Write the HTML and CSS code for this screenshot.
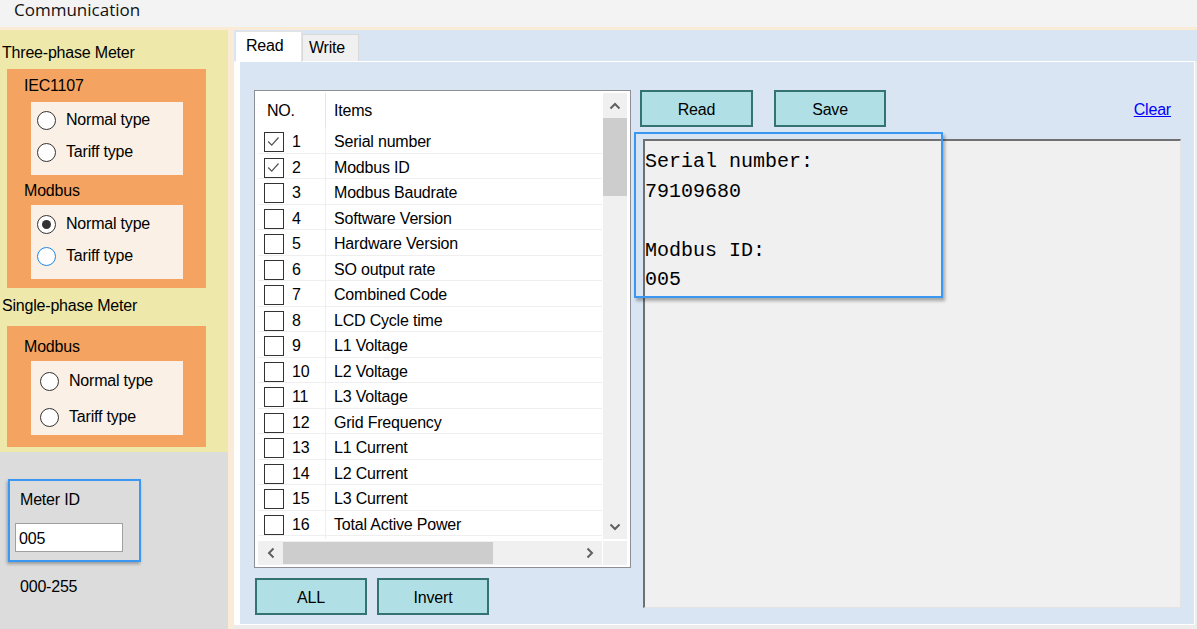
FILE: index.html
```html
<!DOCTYPE html>
<html lang="en">
<head>
<meta charset="utf-8">
<title>Communication</title>
<link rel="stylesheet" href="styles.css">
</head>
<body>
<div class="titlebar">Communication</div>
<div class="main">
  <aside class="side">
    <div class="meters">
      <div class="sect-title first">Three-phase Meter</div>
      <div class="group three">
        <div class="glabel">IEC1107</div>
        <div class="opts a">
          <div class="radio"><span class="circle"></span>Normal type</div>
          <div class="radio"><span class="circle"></span>Tariff type</div>
        </div>
        <div class="glabel b">Modbus</div>
        <div class="opts b">
          <div class="radio"><span class="circle on"></span>Normal type</div>
          <div class="radio"><span class="circle focus"></span>Tariff type</div>
        </div>
      </div>
      <div class="sect-title second">Single-phase Meter</div>
      <div class="group single">
        <div class="glabel">Modbus</div>
        <div class="opts c">
          <div class="radio"><span class="circle"></span>Normal type</div>
          <div class="radio"><span class="circle"></span>Tariff type</div>
        </div>
      </div>
    </div>
    <div class="idarea">
      <div class="idbox">
        <div class="idlabel">Meter ID</div>
        <div class="idinput">005</div>
      </div>
      <div class="range">000-255</div>
    </div>
  </aside>

  <section class="tabs">
    <div class="tabstrip">
      <div class="tab active">Read</div>
      <div class="tab">Write</div>
    </div>
    <div class="page">
      <div class="col-left">
        <div class="listview">
          <div class="rows">
            <div class="lhead"><div class="c1">NO.</div><div class="c2">Items</div></div>
            <div class="row"><div class="c1"><span class="cb"><svg viewBox="0 0 20 20" width="18" height="18"><polyline points="3.5,9.5 7.5,13.5 15,5" fill="none" stroke="#555" stroke-width="1.4"/></svg></span>1</div><div class="c2">Serial number</div></div>
            <div class="row"><div class="c1"><span class="cb"><svg viewBox="0 0 20 20" width="18" height="18"><polyline points="3.5,9.5 7.5,13.5 15,5" fill="none" stroke="#555" stroke-width="1.4"/></svg></span>2</div><div class="c2">Modbus ID</div></div>
            <div class="row"><div class="c1"><span class="cb"></span>3</div><div class="c2">Modbus Baudrate</div></div>
            <div class="row"><div class="c1"><span class="cb"></span>4</div><div class="c2">Software Version</div></div>
            <div class="row"><div class="c1"><span class="cb"></span>5</div><div class="c2">Hardware Version</div></div>
            <div class="row"><div class="c1"><span class="cb"></span>6</div><div class="c2">SO output rate</div></div>
            <div class="row"><div class="c1"><span class="cb"></span>7</div><div class="c2">Combined Code</div></div>
            <div class="row"><div class="c1"><span class="cb"></span>8</div><div class="c2">LCD Cycle time</div></div>
            <div class="row"><div class="c1"><span class="cb"></span>9</div><div class="c2">L1 Voltage</div></div>
            <div class="row"><div class="c1"><span class="cb"></span>10</div><div class="c2">L2 Voltage</div></div>
            <div class="row"><div class="c1"><span class="cb"></span>11</div><div class="c2">L3 Voltage</div></div>
            <div class="row"><div class="c1"><span class="cb"></span>12</div><div class="c2">Grid Frequency</div></div>
            <div class="row"><div class="c1"><span class="cb"></span>13</div><div class="c2">L1 Current</div></div>
            <div class="row"><div class="c1"><span class="cb"></span>14</div><div class="c2">L2 Current</div></div>
            <div class="row"><div class="c1"><span class="cb"></span>15</div><div class="c2">L3 Current</div></div>
            <div class="row"><div class="c1"><span class="cb"></span>16</div><div class="c2">Total Active Power</div></div>
            <div class="row"><div class="c1"></div><div class="c2"></div></div>
          </div>
          <div class="vscroll">
            <div class="arrow"><svg width="12" height="8" viewBox="0 0 12 8"><polyline points="1.5,6.5 6,2 10.5,6.5" fill="none" stroke="#606060" stroke-width="2"/></svg></div>
            <div class="vthumb"></div>
            <div class="spacer"></div>
            <div class="arrow"><svg width="12" height="8" viewBox="0 0 12 8"><polyline points="1.5,1.5 6,6 10.5,1.5" fill="none" stroke="#606060" stroke-width="2"/></svg></div>
          </div>
          <div class="hscroll">
            <div class="harrow"><svg width="8" height="12" viewBox="0 0 8 12"><polyline points="6.5,1.5 2,6 6.5,10.5" fill="none" stroke="#606060" stroke-width="2"/></svg></div>
            <div class="hthumb"></div>
            <div class="spacer"></div>
            <div class="harrow"><svg width="8" height="12" viewBox="0 0 8 12"><polyline points="1.5,1.5 6,6 1.5,10.5" fill="none" stroke="#606060" stroke-width="2"/></svg></div>
          </div>
          <div class="corner"></div>
        </div>
        <div class="btnrow">
          <div class="btn">ALL</div>
          <div class="btn">Invert</div>
        </div>
      </div>
      <div class="col-right">
        <div class="toolbar">
          <div class="btn read">Read</div>
          <div class="btn save">Save</div>
          <a class="clear">Clear</a>
        </div>
        <div class="output">Serial number:
79109680

Modbus ID:
005</div>
        <div class="highlight"></div>
      </div>
    </div>
  </section>
</div>
</body>
</html>
```

FILE: styles.css
```css
* { box-sizing: border-box; margin: 0; padding: 0; }
html, body { width: 1197px; height: 629px; overflow: hidden; }
body {
  background: #FAEBD7;
  font-family: "Liberation Sans", Arial, sans-serif;
  font-size: 16px;
  letter-spacing: -0.2px;
  color: #000;
}
.titlebar {
  height: 27px;
  background: #f3f3f3;
  padding-left: 14px;
  font-family: "Open Sans", sans-serif;
  font-size: 17px;
  line-height: 19px;
  letter-spacing: 0;
  color: #111;
}
.main { display: flex; margin-top: 3px; height: 599px; }

/* left side */
.side { width: 228px; display: flex; flex-direction: column; flex: none; }
.meters { background: #EEE8AA; padding-bottom: 5px; }
.sect-title { padding-left: 2px; line-height: 18px; }
.sect-title.first { padding-top: 14px; margin-bottom: 7px; }
.sect-title.second { margin-top: 9px; margin-bottom: 11px; }
.group { margin-left: 7px; width: 199px; background: #F4A460; }
.group.three { padding: 8px 0 9px 0; }
.group.single { padding: 12px 0 12px 0; }
.glabel { padding-left: 17px; line-height: 18px; }
.glabel.b { margin-top: 7px; }
.opts { margin-left: 24px; width: 152px; background: #FAF0E6; }
.opts.a { margin-top: 7px; padding: 2px 0 7px 6px; }
.opts.b { margin-top: 5px; padding: 3px 0 7px 6px; }
.opts.c { margin-top: 5px; padding: 2px 0 0 9px; }
.radio { display: flex; align-items: center; height: 32px; gap: 10px; }
.opts.c .radio { height: 36px; }
.circle {
  width: 19px; height: 19px; flex: none;
  border: 1.5px solid #333; border-radius: 50%;
  background: #fff;
  display: flex; align-items: center; justify-content: center;
}
.circle.on::after { content: ""; width: 9px; height: 9px; border-radius: 50%; background: #333; }
.circle.focus { border-color: #1e88e5; }

.idarea { flex: 1; background: #DCDCDC; padding-top: 27px; }
.idbox {
  margin-left: 8px; width: 133px; height: 83px;
  border: 2px solid #3a97f2;
  box-shadow: -1px 2px 3px rgba(0,0,0,.3);
  padding-top: 10px;
}
.idlabel { padding-left: 10px; line-height: 18px; }
.idinput {
  margin: 14px 0 0 5px; width: 108px; height: 29px;
  background: #fff; border: 1px solid #a0a0a0;
  padding: 2px 0 0 3px; line-height: 25px;
}
.range { margin-top: 16px; padding-left: 20px; line-height: 18px; }

/* tabs */
.tabs { flex: none; width: 963px; display: flex; flex-direction: column; margin-left: 6px; background: #ececec; }
.tabstrip { height: 31px; background: #D9E5F2; display: flex; align-items: flex-end; }
.tab {
  width: 57px; height: 27px; background: #f0f0f0;
  border: 1px solid #d9d9d9; border-bottom: none;
  padding: 4px 0 0 6px; line-height: 18px;
}
.tab.active {
  margin-left: 1px; width: 67px; height: 31px; margin-bottom: -1px;
  background: #fff; border-color: #e3e3e3;
  padding: 5px 0 0 10px; position: relative; z-index: 1;
}
.page {
  width: 961px; height: 564px;
  border: 1px solid #fff; border-left-width: 6px;
  background: #D9E5F2;
  display: flex; gap: 9px;
  padding: 28px 13px 0 14px;
}
.col-left { width: 377px; flex: none; }
.listview {
  width: 377px; height: 478px;
  border: 1px solid #8e8f94; background: #fff;
  padding: 2px 3px;
  display: grid;
  grid-template-columns: 344px 24px;
  grid-template-rows: 446px 24px;
  gap: 2px 1px;
}
.rows { overflow: hidden; }
.lhead { display: flex; height: 35px; align-items: center; }
.lhead .c1 { width: 68px; height: 35px; padding: 1px 0 0 9px; border-right: 1px solid #e5e5e5; display: flex; align-items: center; }
.lhead .c2 { padding: 1px 0 0 8px; }
.row { display: flex; height: 25.5px; border-bottom: 1px solid #efefef; align-items: center; }
.row .c1 { width: 68px; height: 100%; display: flex; align-items: center; padding: 4px 0 0 6px; border-right: 1px solid #efefef; }
.row .c2 { padding: 4px 0 0 8px; }
.cb {
  width: 20px; height: 20px; flex: none;
  border: 1.5px solid #333; background: #fff; margin-right: 8px;
  display: flex; align-items: center; justify-content: center;
}
.vscroll { background: #f0f0f0; display: flex; flex-direction: column; }
.arrow { height: 25px; display: flex; align-items: center; justify-content: center; flex: none; }
.vthumb { height: 78px; background: #cdcdcd; flex: none; }
.spacer { flex: 1; }
.hscroll { background: #f0f0f0; display: flex; align-items: center; }
.harrow { width: 25px; height: 24px; display: flex; align-items: center; justify-content: center; flex: none; }
.hthumb { width: 210px; height: 22px; background: #cdcdcd; flex: none; }
.corner { background: #f0f0f0; }

.btn {
  height: 37px; width: 112px;
  background: #B0E0E6; border: 2px solid #357373;
  display: flex; align-items: center; justify-content: center;
  padding-top: 2px;
}
.btnrow { display: flex; gap: 10px; margin-top: 10px; padding-left: 1px; }

.col-right { width: 541px; flex: none; position: relative; }
.toolbar { display: flex; align-items: center; height: 37px; }
.btn.read { width: 113px; }
.btn.save { margin-left: 21px; width: 112px; }
.clear { margin-left: auto; margin-right: 10px; padding-top: 2px; color: #0000ff; text-decoration: underline; cursor: pointer; }
.output {
  margin: 12px 0 0 3px; width: 538px; height: 469px;
  background: #f0f0f0;
  border-style: solid; border-width: 2px 1px 1px 2px;
  border-color: #707070 #e3e3e3 #e3e3e3 #707070;
  font-family: "Liberation Mono", monospace;
  font-size: 20px; line-height: 29.5px; letter-spacing: 0;
  padding-top: 6px;
  white-space: pre;
}
.highlight {
  position: absolute; left: -6px; top: 42px;
  width: 309px; height: 166px;
  border: 2px solid #3a97f2;
  box-shadow: 2px 3px 3px rgba(0,0,0,.3);
}
```
